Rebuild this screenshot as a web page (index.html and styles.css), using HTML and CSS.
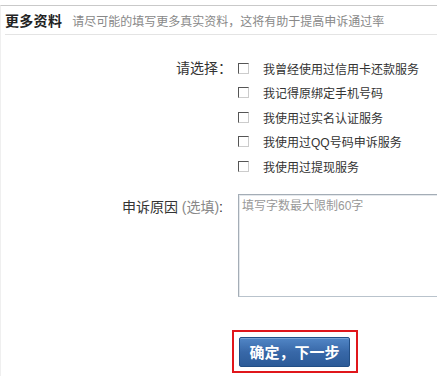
FILE: index.html
```html
<!DOCTYPE html>
<html lang="zh-CN">
<head>
<meta charset="utf-8">
<title>更多资料</title>
<link rel="stylesheet" href="styles.css">
</head>
<body>
<div class="panel">
  <div class="head">
    <span class="title">更多资料</span>
    <span class="sub">请尽可能的填写更多真实资料，这将有助于提高申诉通过率</span>
  </div>
  <div class="form">
    <div class="row">
      <div class="label">请选择：</div>
      <div class="options">
        <label class="opt"><span class="box"></span><span>我曾经使用过信用卡还款服务</span></label>
        <label class="opt"><span class="box"></span><span>我记得原绑定手机号码</span></label>
        <label class="opt"><span class="box"></span><span>我使用过实名认证服务</span></label>
        <label class="opt"><span class="box"></span><span>我使用过QQ号码申诉服务</span></label>
        <label class="opt"><span class="box"></span><span>我使用过提现服务</span></label>
      </div>
    </div>
    <div class="row reason">
      <div class="label label-top">申诉原因 <span class="opt-note">(选填)</span>:</div>
      <div class="area"><span class="ph">填写字数最大限制60字</span></div>
    </div>
    <div class="row submit">
      <div class="label"></div>
      <div class="hl"><button class="btn" type="button">确定，下一步</button></div>
    </div>
  </div>
</div>
</body>
</html>
```
FILE: styles.css
```css
html, body {
  margin: 0;
  padding: 0;
  background: #fff;
  overflow: hidden;
  width: 437px;
  height: 376px;
  font-family: "Liberation Sans", "Noto Sans CJK SC", sans-serif;
  color: #333;
}
.panel {
  margin-top: 5px;
  border-top: 1px solid #c9c9c9;
  border-left: 1px solid #efefef;
  height: 370px;
}
.head {
  margin-left: 4px;
  height: 28px;
  border-bottom: 1px solid #e4e4e4;
  display: flex;
  align-items: center;
}
.title {
  font-size: 14px;
  font-weight: bold;
  color: #222;
  letter-spacing: 0.3px;
}
.sub {
  font-size: 12px;
  color: #888;
  margin-left: 10px;
}
.form {
  padding-top: 21px;
}
.row {
  display: grid;
  grid-template-columns: 231px 1fr;
}
.label {
  text-align: right;
  font-size: 14px;
  color: #333;
  line-height: 25px;
  height: 25px;
}
.options {
  display: flex;
  flex-direction: column;
}
.opt {
  display: flex;
  align-items: center;
  height: 24.5px;
  font-size: 12px;
  color: #333;
}
.box {
  width: 9px;
  height: 9px;
  border: 1px solid #555;
  border-right-color: #ccc;
  border-bottom-color: #ccc;
  margin-left: 6px;
  margin-right: 14px;
  background: #fff;
}
.reason {
  margin-top: 15px;
}
.label-top {
  padding-top: 1px;
  padding-right: 9px;
}
.opt-note {
  color: #888;
}
.area {
  margin-left: 6px;
  width: 199px;
  height: 103px;
  border: 1px solid #b9c3cc;
  border-top-color: #a4adb6;
  border-left-color: #a4adb6;
  border-right: none;
  box-shadow: inset 1px 1px 0 #e4e8ec;
  padding: 1px 3px;
  box-sizing: border-box;
}
.ph {
  font-size: 12px;
  color: #999;
}
.submit {
  margin-top: 33px;
}
.hl {
  width: 126px;
  height: 43px;
  box-sizing: border-box;
  border: 2px solid #e0161b;
  padding: 5px 6px 4px 5px;
}
.btn {
  display: block;
  width: 111px;
  height: 30px;
  margin: 0;
  padding: 0;
  border: 1px solid #224f86;
  border-radius: 2px;
  background: linear-gradient(#5186c6, #3868a8 50%, #2c5b98);
  color: #fff;
  font-family: "Noto Sans CJK SC", sans-serif;
  font-size: 15px;
  font-weight: bold;
  box-shadow: inset 0 1px 0 rgba(255,255,255,0.25);
}
```
